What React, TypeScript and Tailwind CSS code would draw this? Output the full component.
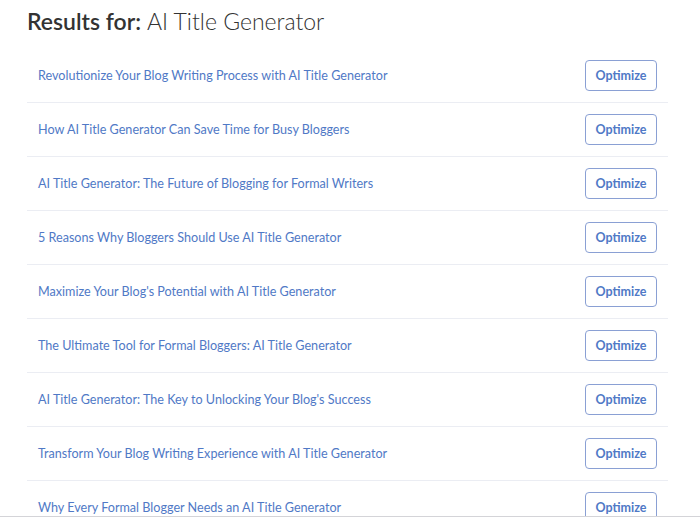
import React from "react";

const titles = [
  "Revolutionize Your Blog Writing Process with AI Title Generator",
  "How AI Title Generator Can Save Time for Busy Bloggers",
  "AI Title Generator: The Future of Blogging for Formal Writers",
  "5 Reasons Why Bloggers Should Use AI Title Generator",
  "Maximize Your Blog's Potential with AI Title Generator",
  "The Ultimate Tool for Formal Bloggers: AI Title Generator",
  "AI Title Generator: The Key to Unlocking Your Blog's Success",
  "Transform Your Blog Writing Experience with AI Title Generator",
  "Why Every Formal Blogger Needs an AI Title Generator",
  "Boost Your Blog's Engagement with AI Title Generator",
];

export default function App() {
  return (
    <div
      className="h-[517px] w-[700px] overflow-hidden bg-white border-b border-[#d4d4d8]"
      style={{ fontFamily: "Lato, 'Noto Sans', sans-serif" }}
    >
      <div className="pl-[27px] w-[668px]">
        <h1 className="pt-[5px] h-[49px] text-[23px] leading-[32px] text-[#333]">
          <span className="font-semibold">Results for:</span>{" "}
          <span className="font-light">AI Title Generator</span>
        </h1>
        <ul>
          {titles.map((t) => (
            <li
              key={t}
              className="h-[54px] flex items-center justify-between pl-[11px] pr-[11px] border-b border-[#ebedf3]"
            >
              <span className="text-[12.6px] text-[#5079c6] translate-y-[1px]">{t}</span>
              <button className="w-[72px] h-[31px] pt-[1px] rounded-[4px] border border-[#8aa0d4] text-[12.5px] font-bold text-[#5079c6] bg-white">
                Optimize
              </button>
            </li>
          ))}
        </ul>
      </div>
    </div>
  );
}
